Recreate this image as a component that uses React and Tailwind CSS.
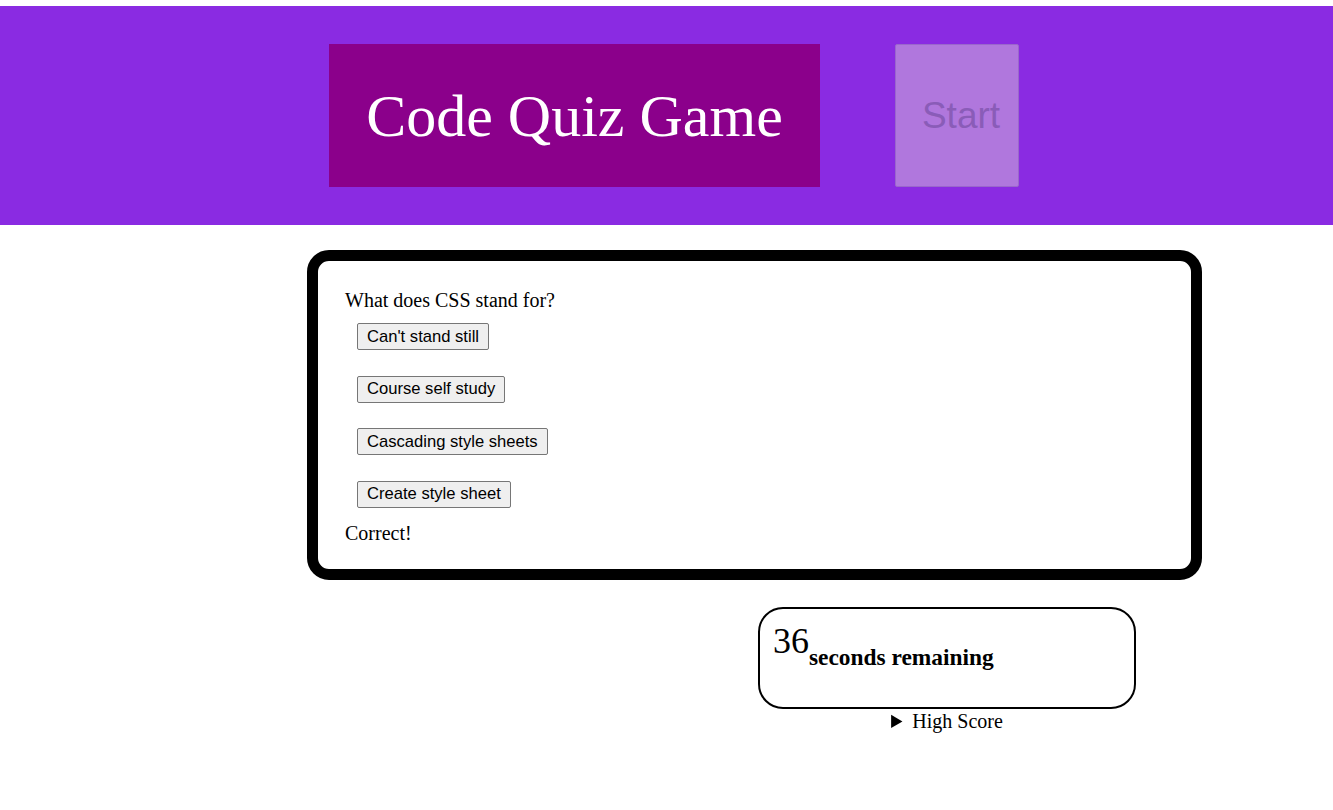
export default function App() {
  return (
    <div className="min-h-[810px] bg-white font-['Liberation_Serif',serif] text-black">
      <header className="mt-[6px] flex h-[219px] items-start bg-[#8a2be2] pl-[329px] pt-[38px]">
        <h1 className="flex h-[143px] w-[491px] items-center justify-center bg-[#8b008b] text-[60px] leading-none text-white">
          Code Quiz Game
        </h1>
        <button className="ml-[75px] h-[143px] w-[124px] rounded-[2px] border border-[#9a66cc] bg-[#b077dd] pl-[8px] font-['Liberation_Sans',sans-serif] text-[37px] text-[#8a5cb8]">
          Start
        </button>
      </header>

      <main className="ml-[307px] mt-[25px] h-[330px] w-[895px] rounded-[22px] border-[11px] border-black px-[27px] pt-[28px]">
        <p className="text-[20px] leading-[23px]">What does CSS stand for?</p>
        <div className="mt-[11px] flex flex-col items-start gap-[25.5px] pl-[12px]">
          {['Can\'t stand still', 'Course self study', 'Cascading style sheets', 'Create style sheet'].map((a) => (
            <button
              key={a}
              className="h-[27px] rounded-[2px] border border-[#767676] bg-[#efefef] px-[9px] font-['Liberation_Sans',sans-serif] text-[16.6px] leading-[18px]"
            >
              {a}
            </button>
          ))}
        </div>
        <p className="mt-[14px] text-[20px] leading-[23px]">Correct!</p>
      </main>

      <section className="ml-[758px] mt-[27px] w-[378px]">
        <div className="h-[102px] rounded-[25px] border-2 border-black px-[13px] pt-[14px]">
          <span className="text-[36px] leading-none">36</span>
          <span className="relative top-[12px] text-[23.4px] font-bold">seconds remaining</span>
        </div>
        <details className="text-center text-[20px] leading-[24px]">
          <summary>High Score</summary>
        </details>
      </section>
    </div>
  );
}
